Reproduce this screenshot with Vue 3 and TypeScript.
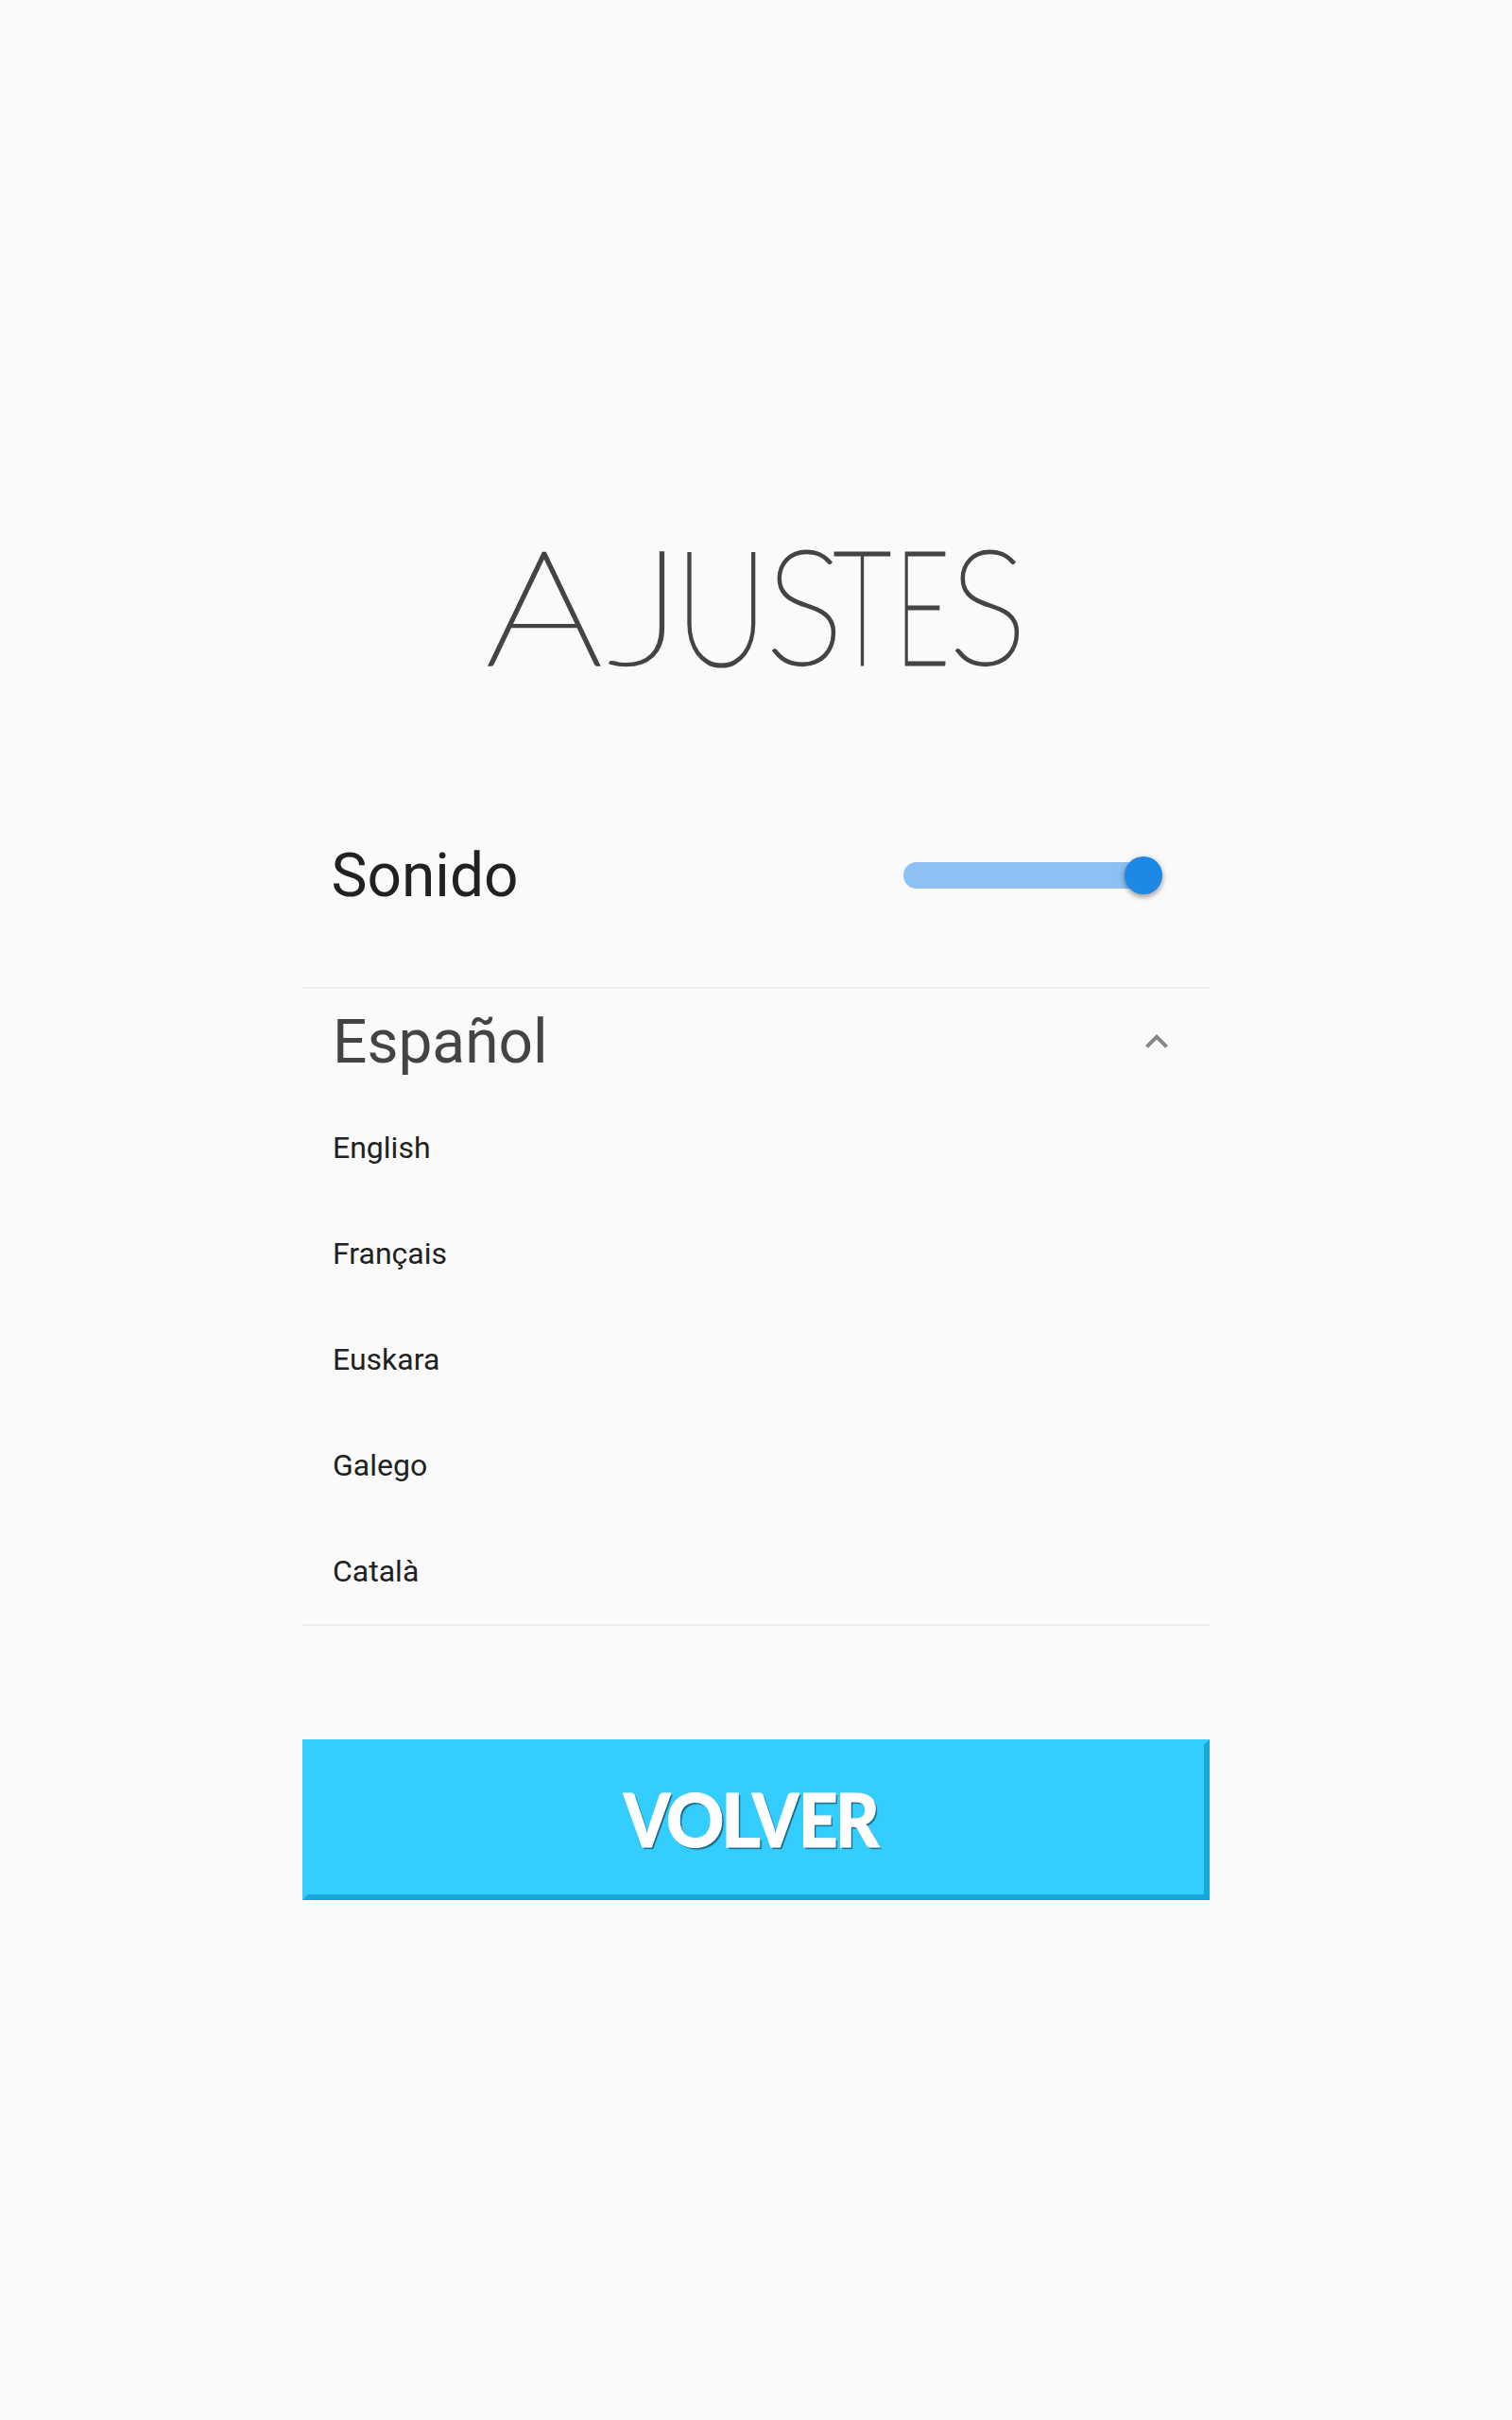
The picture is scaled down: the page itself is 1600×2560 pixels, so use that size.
<script setup lang="ts">
import { ref } from 'vue'

interface Glyph {
  char: string
  width: number
  scale: number
  stroke?: number
}

const title: Glyph[] = [
  { char: 'A', width: 128.7, scale: 1.155, stroke: 2.6 },
  { char: 'J', width: 71.5, scale: 1.167, stroke: 2.5 },
  { char: 'U', width: 95.6, scale: 0.815, stroke: 3.2 },
  { char: 'S', width: 72.8, scale: 0.932, stroke: 2.9 },
  { char: 'T', width: 64.9, scale: 0.636, stroke: 3.2 },
  { char: 'E', width: 56.3, scale: 0.594, stroke: 3.2 },
  { char: 'S', width: 85, scale: 0.932, stroke: 2.9 },
]

const back: Glyph[] = [
  { char: 'V', width: 45.6, scale: 0.9, stroke: 1 },
  { char: 'O', width: 57.8, scale: 0.97, stroke: 1 },
  { char: 'L', width: 32.6, scale: 1.03, stroke: 1 },
  { char: 'V', width: 49.3, scale: 0.9, stroke: 1 },
  { char: 'E', width: 38.8, scale: 0.93, stroke: 1 },
  { char: 'R', width: 48, scale: 0.92, stroke: 1 },
]

const languages = ['English', 'Français', 'Euskara', 'Galego', 'Català']
const sound = ref(true)
const open = ref(true)

function glyphStyle(g: Glyph) {
  return {
    width: `${g.width}px`,
    transform: `scaleX(${g.scale})`,
    WebkitTextStrokeWidth: `${g.stroke ?? 0}px`,
  }
}
</script>

<template>
  <main class="settings">
    <h1 class="title"><span v-for="(g, i) in title" :key="i" class="glyph" :style="glyphStyle(g)">{{ g.char }}</span></h1>

    <div class="row">
      <span class="label">Sonido</span>
      <div class="switch" role="switch" :aria-checked="sound" @click="sound = !sound">
        <div class="thumb" :class="{ off: !sound }"></div>
      </div>
    </div>

    <section class="languages">
      <div class="header" @click="open = !open">
        <span class="current">Español</span>
        <svg class="chevron" viewBox="0 0 24 24" aria-hidden="true">
          <path d="M7.41 15.41 12 10.83l4.59 4.58L18 14l-6-6-6 6z" />
        </svg>
      </div>
      <template v-if="open">
        <div v-for="l in languages" :key="l" class="option">{{ l }}</div>
      </template>
    </section>

    <button class="back" type="button">
      <span class="back-label"><span v-for="(g, i) in back" :key="i" class="glyph" :style="glyphStyle(g)">{{ g.char }}</span></span>
    </button>
  </main>
</template>

<style>
body {
  background: #fafafa;
}
</style>

<style scoped>
.settings {
  box-sizing: border-box;
  width: 960px;
  height: 2560px;
  margin: 0 auto;
  padding-top: 554px;
  display: flex;
  flex-direction: column;
  font-family: Roboto, sans-serif;
  color: #212121;
}
.glyph {
  display: block;
  flex: none;
  transform-origin: 0 0;
  white-space: nowrap;
}
.title {
  display: flex;
  height: 168px;
  margin: 0;
  padding-left: 193.9px;
  font: 100 168px/168px Lato, sans-serif;
  color: #444;
  -webkit-text-stroke-color: #444;
}
.row {
  display: flex;
  align-items: center;
  justify-content: space-between;
  height: 100px;
  margin-top: 154px;
  padding: 0 50px 0 30.5px;
}
.label {
  padding-top: 2px;
  font-size: 64px;
  line-height: 64px;
}
.switch {
  display: flex;
  align-items: center;
  justify-content: flex-end;
  width: 274px;
  height: 28px;
  border-radius: 14px;
  background: linear-gradient(90deg, #8ec1f1 260px, transparent 260px);
}
.thumb {
  width: 40px;
  height: 40px;
  border-radius: 50%;
  background: #1e88e5;
  box-shadow: 0 3px 5px rgba(0, 0, 0, 0.3), 0 1px 8px rgba(0, 0, 0, 0.14);
}
.thumb.off {
  margin-right: auto;
}
.languages {
  margin-top: 68px;
  border-top: 2px solid #eee;
  border-bottom: 2px solid #eee;
}
.header {
  display: flex;
  align-items: center;
  justify-content: space-between;
  height: 112px;
  padding: 0 32px;
}
.current {
  padding-top: 2px;
  font-size: 64px;
  line-height: 64px;
  color: #444;
}
.chevron {
  width: 48px;
  height: 48px;
  fill: #888;
}
.option {
  height: 112px;
  padding-left: 32px;
  font-size: 32px;
  line-height: 112px;
}
.back {
  display: flex;
  align-items: center;
  box-sizing: border-box;
  width: 960px;
  height: 170px;
  margin-top: 120px;
  padding: 4px 0 0 339.9px;
  border: 6px solid;
  border-color: #33cdff #17a8d8 #17a8d8 #33cdff;
  background: #33cdff;
}
.back-label {
  display: flex;
  margin: -6px 0 0 -6px;
  font: 900 78px/80px Lato, sans-serif;
  color: #fff;
  -webkit-text-stroke-color: #fff;
  text-shadow: 2px 2px 1px rgba(0, 0, 0, 0.5);
}
</style>
